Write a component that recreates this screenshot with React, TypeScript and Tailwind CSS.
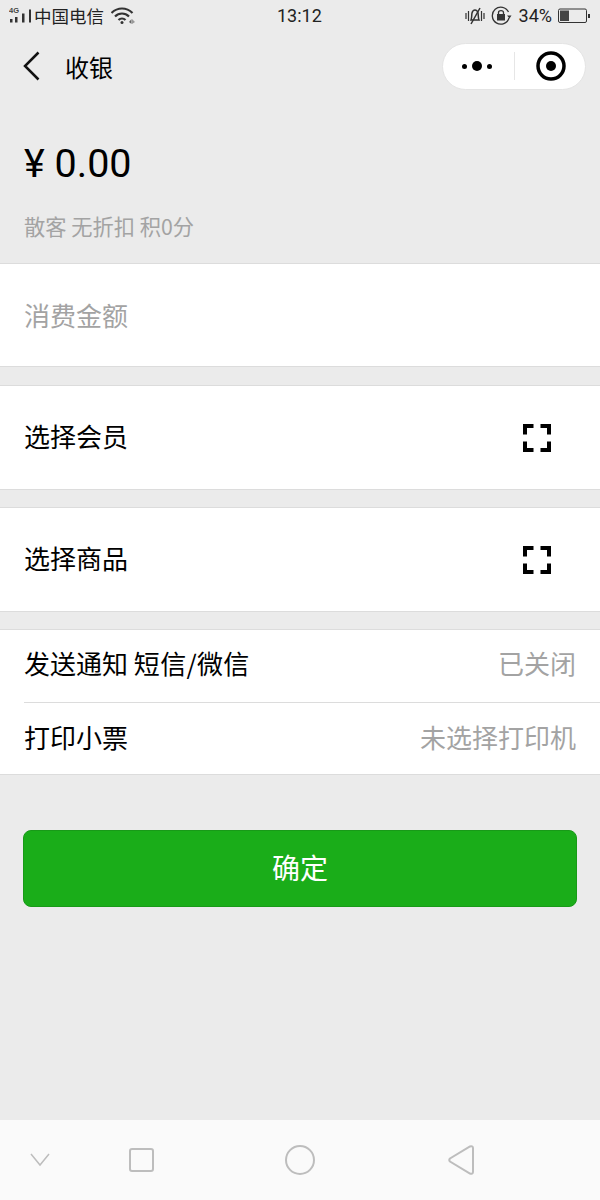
import React from "react";

const font = { fontFamily: '"Noto Sans CJK SC", "Noto Sans", sans-serif' };

function ScanIcon() {
  return (
    <svg width="28" height="28" viewBox="0 0 28 28" fill="none" stroke="#000" strokeWidth="4">
      <path d="M2 10.500V2H10.500" />
      <path d="M17.500 2H26V10.500" />
      <path d="M2 17.500V26H10.500" />
      <path d="M17.500 26H26V17.500" />
    </svg>
  );
}

function StatusBar() {
  return (
    <div className="relative flex h-[32px] items-center justify-between pl-[9px] pr-[10px] text-[#222]">
      <div className="flex items-center">
        <svg width="25" height="24" viewBox="0 0 25 24" fill="#333">
          <text x="0" y="9" fontSize="7.500" fontFamily="Liberation Sans" fontWeight="700" fill="#444">4G</text>
          <rect x="1" y="15" width="2.500" height="3.500" />
          <rect x="6" y="13" width="2.500" height="5.500" />
          <rect x="13" y="9.500" width="2.500" height="9" />
          <rect x="20" y="5.500" width="2" height="13" />
        </svg>
        <span className="text-[17.500px] leading-none">中国电信</span>
        <svg className="ml-[7px]" width="24" height="18" viewBox="0 0 24 18" fill="none" stroke="#333" strokeWidth="2.200">
          <path d="M0.500 6C6.500 0 15.500 0 21.500 6" />
          <path d="M4 9.500C8 5.500 14 5.500 18 9.500" />
          <path d="M7.500 13C9.500 11 12.500 11 14.500 13" />
          <circle cx="11" cy="15.500" r="1.500" fill="#333" stroke="none" />
          <path d="M18 15L20.500 12V17Z" fill="#666" stroke="none" />
          <path d="M21 12L24 15L21 17Z" fill="#999" stroke="none" />
        </svg>
      </div>
      <span className="absolute left-[277px] top-[4px] text-[18px] leading-[24px]" style={{ fontFamily: "Roboto, sans-serif" }}>13:12</span>
      <div className="flex items-center">
        <svg width="20" height="20" viewBox="0 0 20 20" fill="none" stroke="#333" strokeWidth="1.500">
          <path d="M6 14C7 12 6.500 9 7 7C7.500 5 9 4 10 4C11 4 12.500 5 13 7C13.500 9 13 12 14 14Z" />
          <path d="M15 2L6 18" />
          <path d="M1 7V13M3.500 5V15M16.500 5V15M19 7V13" strokeWidth="1.200" />
        </svg>
        <svg className="ml-[6px]" width="21" height="20" viewBox="0 0 21 20" fill="none" stroke="#333" strokeWidth="1.300">
          <path d="M18 12A8.500 8.500 0 1 1 17.500 6" />
          <path d="M20.500 9.500H16L18.500 12.500Z" fill="#333" stroke="none" />
          <rect x="6" y="8" width="8" height="6.500" fill="#333" stroke="none" />
          <path d="M7.500 8V6.500C7.500 4 12.500 4 12.500 6.500V8" />
        </svg>
        <span className="ml-[7px] text-[18px] leading-none" style={{ fontFamily: "Roboto, sans-serif" }}>34%</span>
        <svg className="ml-[6px]" width="32" height="16" viewBox="0 0 32 16" fill="none">
          <rect x="0.500" y="1" width="28" height="13.500" rx="1.500" stroke="#333" />
          <rect x="2" y="2.500" width="9" height="10.500" fill="#444" />
          <rect x="30" y="6" width="2" height="4" fill="#333" />
        </svg>
      </div>
    </div>
  );
}

function NavBar() {
  return (
    <div className="flex h-[70px] items-center justify-between pl-[23px] pr-[14px]">
      <div className="flex items-center">
        <svg className="mb-[2px]" width="17" height="30" viewBox="0 0 17 30" fill="none" stroke="#111" strokeWidth="2.500">
          <path d="M15.500 1.500L2 15L15.500 28.500" />
        </svg>
        <span className="ml-[25px] text-[24px] leading-none text-black">收银</span>
      </div>
      <div className="mb-[2px] flex h-[47px] w-[144px] items-center rounded-full border border-[#e4e4e4] bg-white">
        <div className="flex w-[71px] items-center justify-center gap-[5px] pr-[3px]">
          <span className="h-[5px] w-[5px] rounded-full bg-black" />
          <span className="h-[10px] w-[10px] rounded-full bg-black" />
          <span className="h-[5px] w-[5px] rounded-full bg-black" />
        </div>
        <div className="h-[28px] w-px bg-[#e6e6e6]" />
        <div className="flex flex-1 items-center justify-center pl-[2px]">
          <svg width="32" height="32" viewBox="0 0 32 32">
            <circle cx="16" cy="16" r="13" fill="none" stroke="#000" strokeWidth="3.500" />
            <circle cx="16" cy="16" r="5" fill="#000" />
          </svg>
        </div>
      </div>
    </div>
  );
}

function ScanRow({ label }: { label: string }) {
  return (
    <div className="flex h-[105px] items-center justify-between border-y border-[#dcdcdc] bg-white pl-[24px] pr-[49px]">
      <span className="mb-[4px] text-[26px] leading-none text-black">{label}</span>
      <ScanIcon />
    </div>
  );
}

function NavKeys() {
  return (
    <div className="flex h-[80px] items-center bg-[#fafafa]">
      <svg className="ml-[30px]" width="20" height="14" viewBox="0 0 20 14" fill="none" stroke="#bdbdbd" strokeWidth="1.500">
        <path d="M1 1L10 12L19 1" />
      </svg>
      <svg className="ml-[79px]" width="26" height="28" viewBox="0 0 26 28" fill="none" stroke="#bdbdbd" strokeWidth="2">
        <rect x="1" y="3" width="23" height="22" rx="2" />
      </svg>
      <svg className="ml-[129px]" width="32" height="32" viewBox="0 0 32 32" fill="none" stroke="#bdbdbd" strokeWidth="2">
        <circle cx="16" cy="16" r="14" />
      </svg>
      <svg className="ml-[132px]" width="26" height="32" viewBox="0 0 26 32" fill="none" stroke="#bdbdbd" strokeWidth="2">
        <path d="M22 2.500C23.500 1.800 25 2.500 25 4V28C25 29.500 23.500 30.200 22 29.500L2 17.500C1 16.500 1 15.500 2 14.500Z" />
      </svg>
    </div>
  );
}

export default function App() {
  return (
    <div className="flex h-[1200px] w-[600px] flex-col overflow-hidden bg-[#ebebeb]" style={font}>
      <StatusBar />
      <NavBar />
      <div className="flex h-[161px] flex-col pl-[24px]">
        <div className="mt-[36px] text-[39.500px] leading-[52px] text-black" style={{ fontFamily: 'Roboto, "Noto Sans CJK SC", sans-serif' }}>¥ 0.00</div>
        <div className="mt-[21px] text-[21.250px] leading-[30px] text-[#a3a3a3]">散客 无折扣 积0分</div>
      </div>
      <div className="flex h-[104px] items-center border-y border-[#dcdcdc] bg-white pl-[24px]">
        <span className="text-[26px] leading-none text-[#a3a3a3]">消费金额</span>
      </div>
      <div className="mt-[18px]"><ScanRow label="选择会员" /></div>
      <div className="mt-[17px]"><ScanRow label="选择商品" /></div>
      <div className="mt-[17px] border-y border-[#dcdcdc] bg-white pl-[24px]">
        <div className="flex h-[73px] items-center justify-between border-b border-[#dcdcdc] pb-[6px] pr-[24px]">
          <span className="text-[26px] leading-none text-black">
            发送通知 <span className="tracking-[0.3px]">短信/微信</span>
          </span>
          <span className="text-[26px] leading-none text-[#a3a3a3]">已关闭</span>
        </div>
        <div className="flex h-[71px] items-center justify-between pb-[3px] pr-[24px]">
          <span className="text-[26px] leading-none text-black">打印小票</span>
          <span className="text-[26px] leading-none text-[#a3a3a3]">未选择打印机</span>
        </div>
      </div>
      <button className="mx-[23px] mt-[55px] flex h-[77px] items-center justify-center rounded-[8px] border border-[#189a18] bg-[#1aad19] pb-[4px] text-[28px] leading-none text-white">
        确定
      </button>
      <div className="flex-1" />
      <NavKeys />
    </div>
  );
}
